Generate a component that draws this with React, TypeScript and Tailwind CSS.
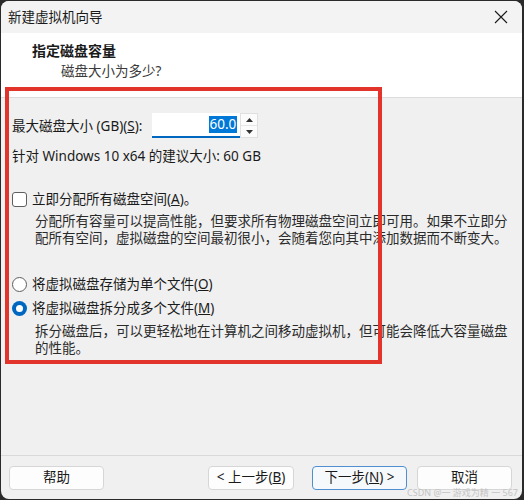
import React from 'react'

const font = "font-['Noto_Sans','Noto_Sans_CJK_SC',sans-serif]"

function Checkbox() {
  return <span className="w-[15px] h-[15px] rounded-[3px] border border-[#5f5f5f] bg-white shrink-0" />
}

function Radio({ checked }: { checked?: boolean }) {
  if (checked) {
    return (
      <span className="w-[15px] h-[15px] rounded-full bg-[#0067c0] flex items-center justify-center shrink-0">
        <span className="w-[7px] h-[7px] rounded-full bg-white" />
      </span>
    )
  }
  return <span className="w-[15px] h-[15px] rounded-full border border-[#5f5f5f] bg-white shrink-0" />
}

function Button({ children, primary, w = 'w-[95px]' }: { children: React.ReactNode; primary?: boolean; w?: string }) {
  return (
    <button
      className={
        primary
          ? `h-[24px] ${w} rounded-[4px] border border-[#4f8fcf] bg-[#f6f9fc] text-[13.5px] text-[#1a1a1a] leading-none`
          : `h-[24px] ${w} rounded-[4px] border border-[#d6d6d6] bg-[#fdfdfd] text-[13.5px] text-[#1a1a1a] leading-none`
      }
    >
      {children}
    </button>
  )
}

export default function App() {
  return (
    <div className={`w-[524px] h-[500px] bg-[#2a2a2a] pl-px pr-[2px] pt-px pb-px ${font}`}>
      <div className="relative h-full rounded-[8px] overflow-hidden bg-[#f0f0f0] flex flex-col">
        {/* Title bar */}
        <div className="h-[32px] bg-[#f3f3f3] flex items-center justify-between pl-[7px] pr-[14px]">
          <span className="text-[13.5px] text-[#1a1a1a]">新建虚拟机向导</span>
          <svg width="14" height="14" viewBox="0 0 14 14" className="text-[#1a1a1a]">
            <path d="M1 1L13 13M13 1L1 13" stroke="currentColor" strokeWidth="1.1" />
          </svg>
        </div>

        {/* Header */}
        <div className="h-[65px] bg-white border-b border-[#dcdcdc] pt-[8px] pl-[31px]">
          <div className="text-[14px] leading-[20px] font-bold text-[#1a1a1a]">指定磁盘容量</div>
          <div className="text-[13.5px] leading-[20px] text-[#3a3a3a] pl-[29px]">磁盘大小为多少?</div>
        </div>

        {/* Content */}
        <div className="flex-1 pl-[11px] text-[13.5px] text-[#1a1a1a]">
          <div className="mt-[15px] flex items-center h-[25px]">
            <span className="leading-[20px]">
              最大磁盘大小 (GB)(<span className="underline">S</span>):
            </span>
            <div className="ml-[10px] flex h-[25px]">
              <div className="w-[88px] bg-white border-b-2 border-[#0067c0] flex items-center justify-end pr-[3px]">
                <span className="bg-[#0078d7] text-white leading-[17px] px-px">60.0</span>
              </div>
              <div className="w-[18px] flex flex-col bg-[#fbfbfb] border border-[#e0e0e0]">
                <div className="flex-1 flex items-center justify-center border-b border-[#e6e6e6]">
                  <svg width="7" height="4" viewBox="0 0 7 4">
                    <path d="M0 4L3.5 0L7 4Z" fill="#333" />
                  </svg>
                </div>
                <div className="flex-1 flex items-center justify-center">
                  <svg width="7" height="4" viewBox="0 0 7 4">
                    <path d="M0 0L3.5 4L7 0Z" fill="#333" />
                  </svg>
                </div>
              </div>
            </div>
          </div>

          <div className="mt-[8px] leading-[20px]">针对 Windows 10 x64 的建议大小: 60 GB</div>

          <div className="mt-[23px] flex items-center gap-[5px] leading-[20px]">
            <Checkbox />
            <span>
              立即分配所有磁盘空间(<span className="underline">A</span>)。
            </span>
          </div>
          <div className="mt-[4px] pl-[23px] leading-[17px] text-[#2a2a2a]">
            分配所有容量可以提高性能，但要求所有物理磁盘空间立即可用。如果不立即分
            <br />
            配所有空间，虚拟磁盘的空间最初很小，会随着您向其中添加数据而不断变大。
          </div>

          <div className="mt-[27px] flex items-center gap-[5px] leading-[20px]">
            <Radio />
            <span>
              将虚拟磁盘存储为单个文件(<span className="underline">O</span>)
            </span>
          </div>
          <div className="mt-[4px] flex items-center gap-[5px] leading-[20px]">
            <Radio checked />
            <span>
              将虚拟磁盘拆分成多个文件(<span className="underline">M</span>)
            </span>
          </div>
          <div className="mt-[5px] pl-[23px] leading-[17px] text-[#2a2a2a]">
            拆分磁盘后，可以更轻松地在计算机之间移动虚拟机，但可能会降低大容量磁盘
            <br />
            的性能。
          </div>
        </div>

        {/* Footer */}
        <div className="h-[44px] border-t border-[#d9d9d9] flex items-start pt-[10px] pl-[8px] pr-[10px]">
          <Button>帮助</Button>
          <div className="flex-1" />
          <Button w="w-[86px]">
            &lt; 上一步(<span className="underline">B</span>)
          </Button>
          <div className="w-[18px]" />
          <Button primary>
            下一步(<span className="underline">N</span>) &gt;
          </Button>
          <div className="w-[10px]" />
          <Button>取消</Button>
        </div>

        <div className="absolute right-[4px] bottom-[1px] text-[9px] leading-[10px] text-[#c4c4c4]">
          CSDN @一 游戏为精 一 567
        </div>

        {/* red annotation box */}
        <div className="absolute left-[4px] top-[86px] w-[377px] h-[277px] border-[4px] border-[#e3342b] pointer-events-none" />
      </div>
    </div>
  )
}
